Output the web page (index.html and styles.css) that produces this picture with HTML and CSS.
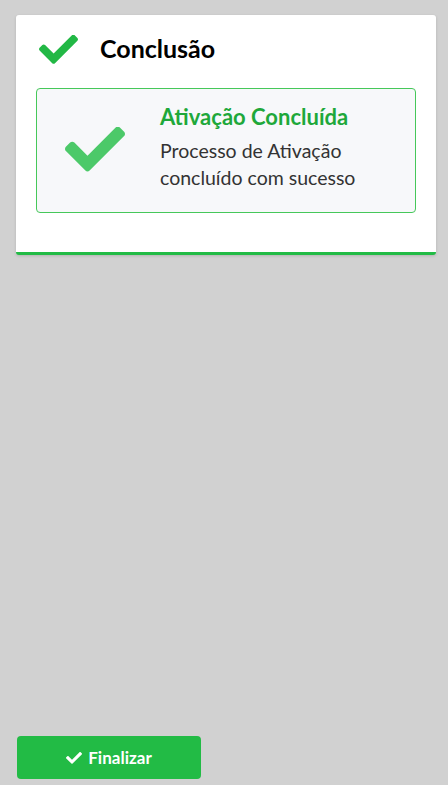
FILE: index.html
```html
<!DOCTYPE html>
<html lang="pt">
<head>
<meta charset="utf-8">
<link rel="stylesheet" href="styles.css">
</head>
<body>
<div class="page">
  <section class="card">
    <header class="card-head">
      <svg class="head-icon" viewBox="0 70 512 380" width="39" height="29"><path fill="#22b845" d="M173.898 439.404l-166.4-166.4c-9.997-9.997-9.997-26.206 0-36.204l36.203-36.204c9.997-9.998 26.207-9.998 36.204 0L192 312.69 432.095 72.596c9.997-9.997 26.207-9.997 36.204 0l36.203 36.204c9.997 9.997 9.997 26.206 0 36.204l-294.4 294.401c-9.998 9.997-26.207 9.997-36.204-.001z"/></svg>
      <h1 class="title">Conclusão</h1>
    </header>
    <div class="status">
      <svg class="status-icon" viewBox="0 70 512 380" width="60" height="45"><path fill="#4cc969" d="M173.898 439.404l-166.4-166.4c-9.997-9.997-9.997-26.206 0-36.204l36.203-36.204c9.997-9.998 26.207-9.998 36.204 0L192 312.69 432.095 72.596c9.997-9.997 26.207-9.997 36.204 0l36.203 36.204c9.997 9.997 9.997 26.206 0 36.204l-294.4 294.401c-9.998 9.997-26.207 9.997-36.204-.001z"/></svg>
      <div class="status-text">
        <h2 class="status-title">Ativação Concluída</h2>
        <p class="status-desc">Processo de Ativação concluído com sucesso</p>
      </div>
    </div>
  </section>
  <div class="spacer"></div>
  <button class="btn">
    <svg class="btn-icon" viewBox="0 70 512 380" width="16" height="12"><path fill="#fff" d="M173.898 439.404l-166.4-166.4c-9.997-9.997-9.997-26.206 0-36.204l36.203-36.204c9.997-9.998 26.207-9.998 36.204 0L192 312.69 432.095 72.596c9.997-9.997 26.207-9.997 36.204 0l36.203 36.204c9.997 9.997 9.997 26.206 0 36.204l-294.4 294.401c-9.998 9.997-26.207 9.997-36.204-.001z"/></svg>
    Finalizar
  </button>
</div>
</body>
</html>
```
FILE: styles.css
```css
html, body {
  margin: 0;
  padding: 0;
  background: #d1d1d1;
  font-family: Lato, "Open Sans", sans-serif;
}
.page {
  height: 785px;
  box-sizing: border-box;
  padding: 15px 12px 6px 16px;
  display: flex;
  flex-direction: column;
}
.card {
  background: #fff;
  border-radius: 3px;
  border-bottom: 3px solid #22bb45;
  box-shadow: 0 1px 3px rgba(0,0,0,0.15);
  padding: 18px 20px 39px 20px;
}
.card-head {
  display: flex;
  align-items: center;
  height: 30px;
}
.head-icon {
  margin-left: 3px;
  margin-right: 22px;
  margin-top: 2px;
}
.title {
  margin: 0;
  font-size: 25px;
  font-weight: 700;
  color: #000;
}
.status {
  margin-top: 25px;
  border: 1px solid #46c85a;
  border-radius: 4px;
  background: #f7f8fa;
  display: flex;
  align-items: center;
  height: 125px;
  box-sizing: border-box;
  padding-left: 28px;
}
.status-icon {
  margin-right: 35px;
  margin-bottom: 2px;
}
.status-text {
  padding-bottom: 7px;
}
.status-title {
  margin: 0 0 6px 0;
  font-size: 22px;
  line-height: 28px;
  font-weight: 700;
  color: #1ea83a;
}
.status-desc {
  margin: 0;
  font-size: 19.5px;
  line-height: 27px;
  color: #333;
  width: 215px;
}
.spacer { flex: 1; }
.btn {
  align-self: flex-start;
  margin-left: 1px;
  width: 184px;
  height: 43px;
  background: #22bb45;
  border: none;
  border-radius: 4px;
  color: #fff;
  font-family: Lato, sans-serif;
  font-size: 17px;
  font-weight: 700;
  display: flex;
  align-items: center;
  justify-content: center;
  gap: 6px;
  padding: 0;
}
```
